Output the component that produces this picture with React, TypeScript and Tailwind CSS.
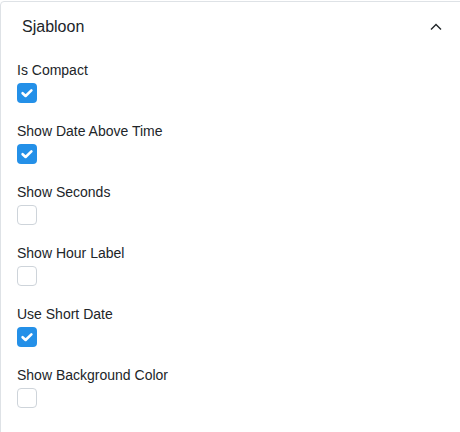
import React from "react";

const items: { label: string; checked: boolean }[] = [
  { label: "Is Compact", checked: true },
  { label: "Show Date Above Time", checked: true },
  { label: "Show Seconds", checked: false },
  { label: "Show Hour Label", checked: false },
  { label: "Use Short Date", checked: true },
  { label: "Show Background Color", checked: false },
];

function Box({ checked }: { checked: boolean }) {
  if (checked) {
    return (
      <div className="w-[20px] h-[20px] rounded-[4px] bg-[#2490e8] flex items-center justify-center">
        <svg width="14" height="14" viewBox="0 0 14 14" fill="none">
          <path d="M2.6 7.2 L5.6 10 L11.4 4.4" stroke="#fff" strokeWidth="2.6" strokeLinecap="round" strokeLinejoin="round" />
        </svg>
      </div>
    );
  }
  return <div className="w-[20px] h-[20px] rounded-[4px] border border-[#ced4da] bg-white" />;
}

export default function App() {
  return (
    <div className="w-[460px] h-[432px] overflow-hidden bg-white" style={{ fontFamily: '"Liberation Sans", Arial, sans-serif' }}>
      <div className="mt-px w-[470px] h-[480px] border border-[#dee2e6] rounded-[4px] bg-white">
        <div className="h-[49px] flex items-center pl-[21px] pr-[27px]">
          <span className="text-[16px] text-[#212529] flex-1">Sjabloon</span>
          <svg width="12" height="8" viewBox="0 0 12 8" fill="none">
            <path d="M1 6.5 L6 1.5 L11 6.5" stroke="#212529" strokeWidth="1.4" />
          </svg>
        </div>
        <div className="pl-[16px] pt-[9px] flex flex-col">
          {items.map((it) => (
            <div key={it.label} className="h-[61px]">
              <div className="text-[14px] leading-[20px] text-[#212529]">{it.label}</div>
              <div className="mt-[3px]">
                <Box checked={it.checked} />
              </div>
            </div>
          ))}
        </div>
      </div>
    </div>
  );
}
